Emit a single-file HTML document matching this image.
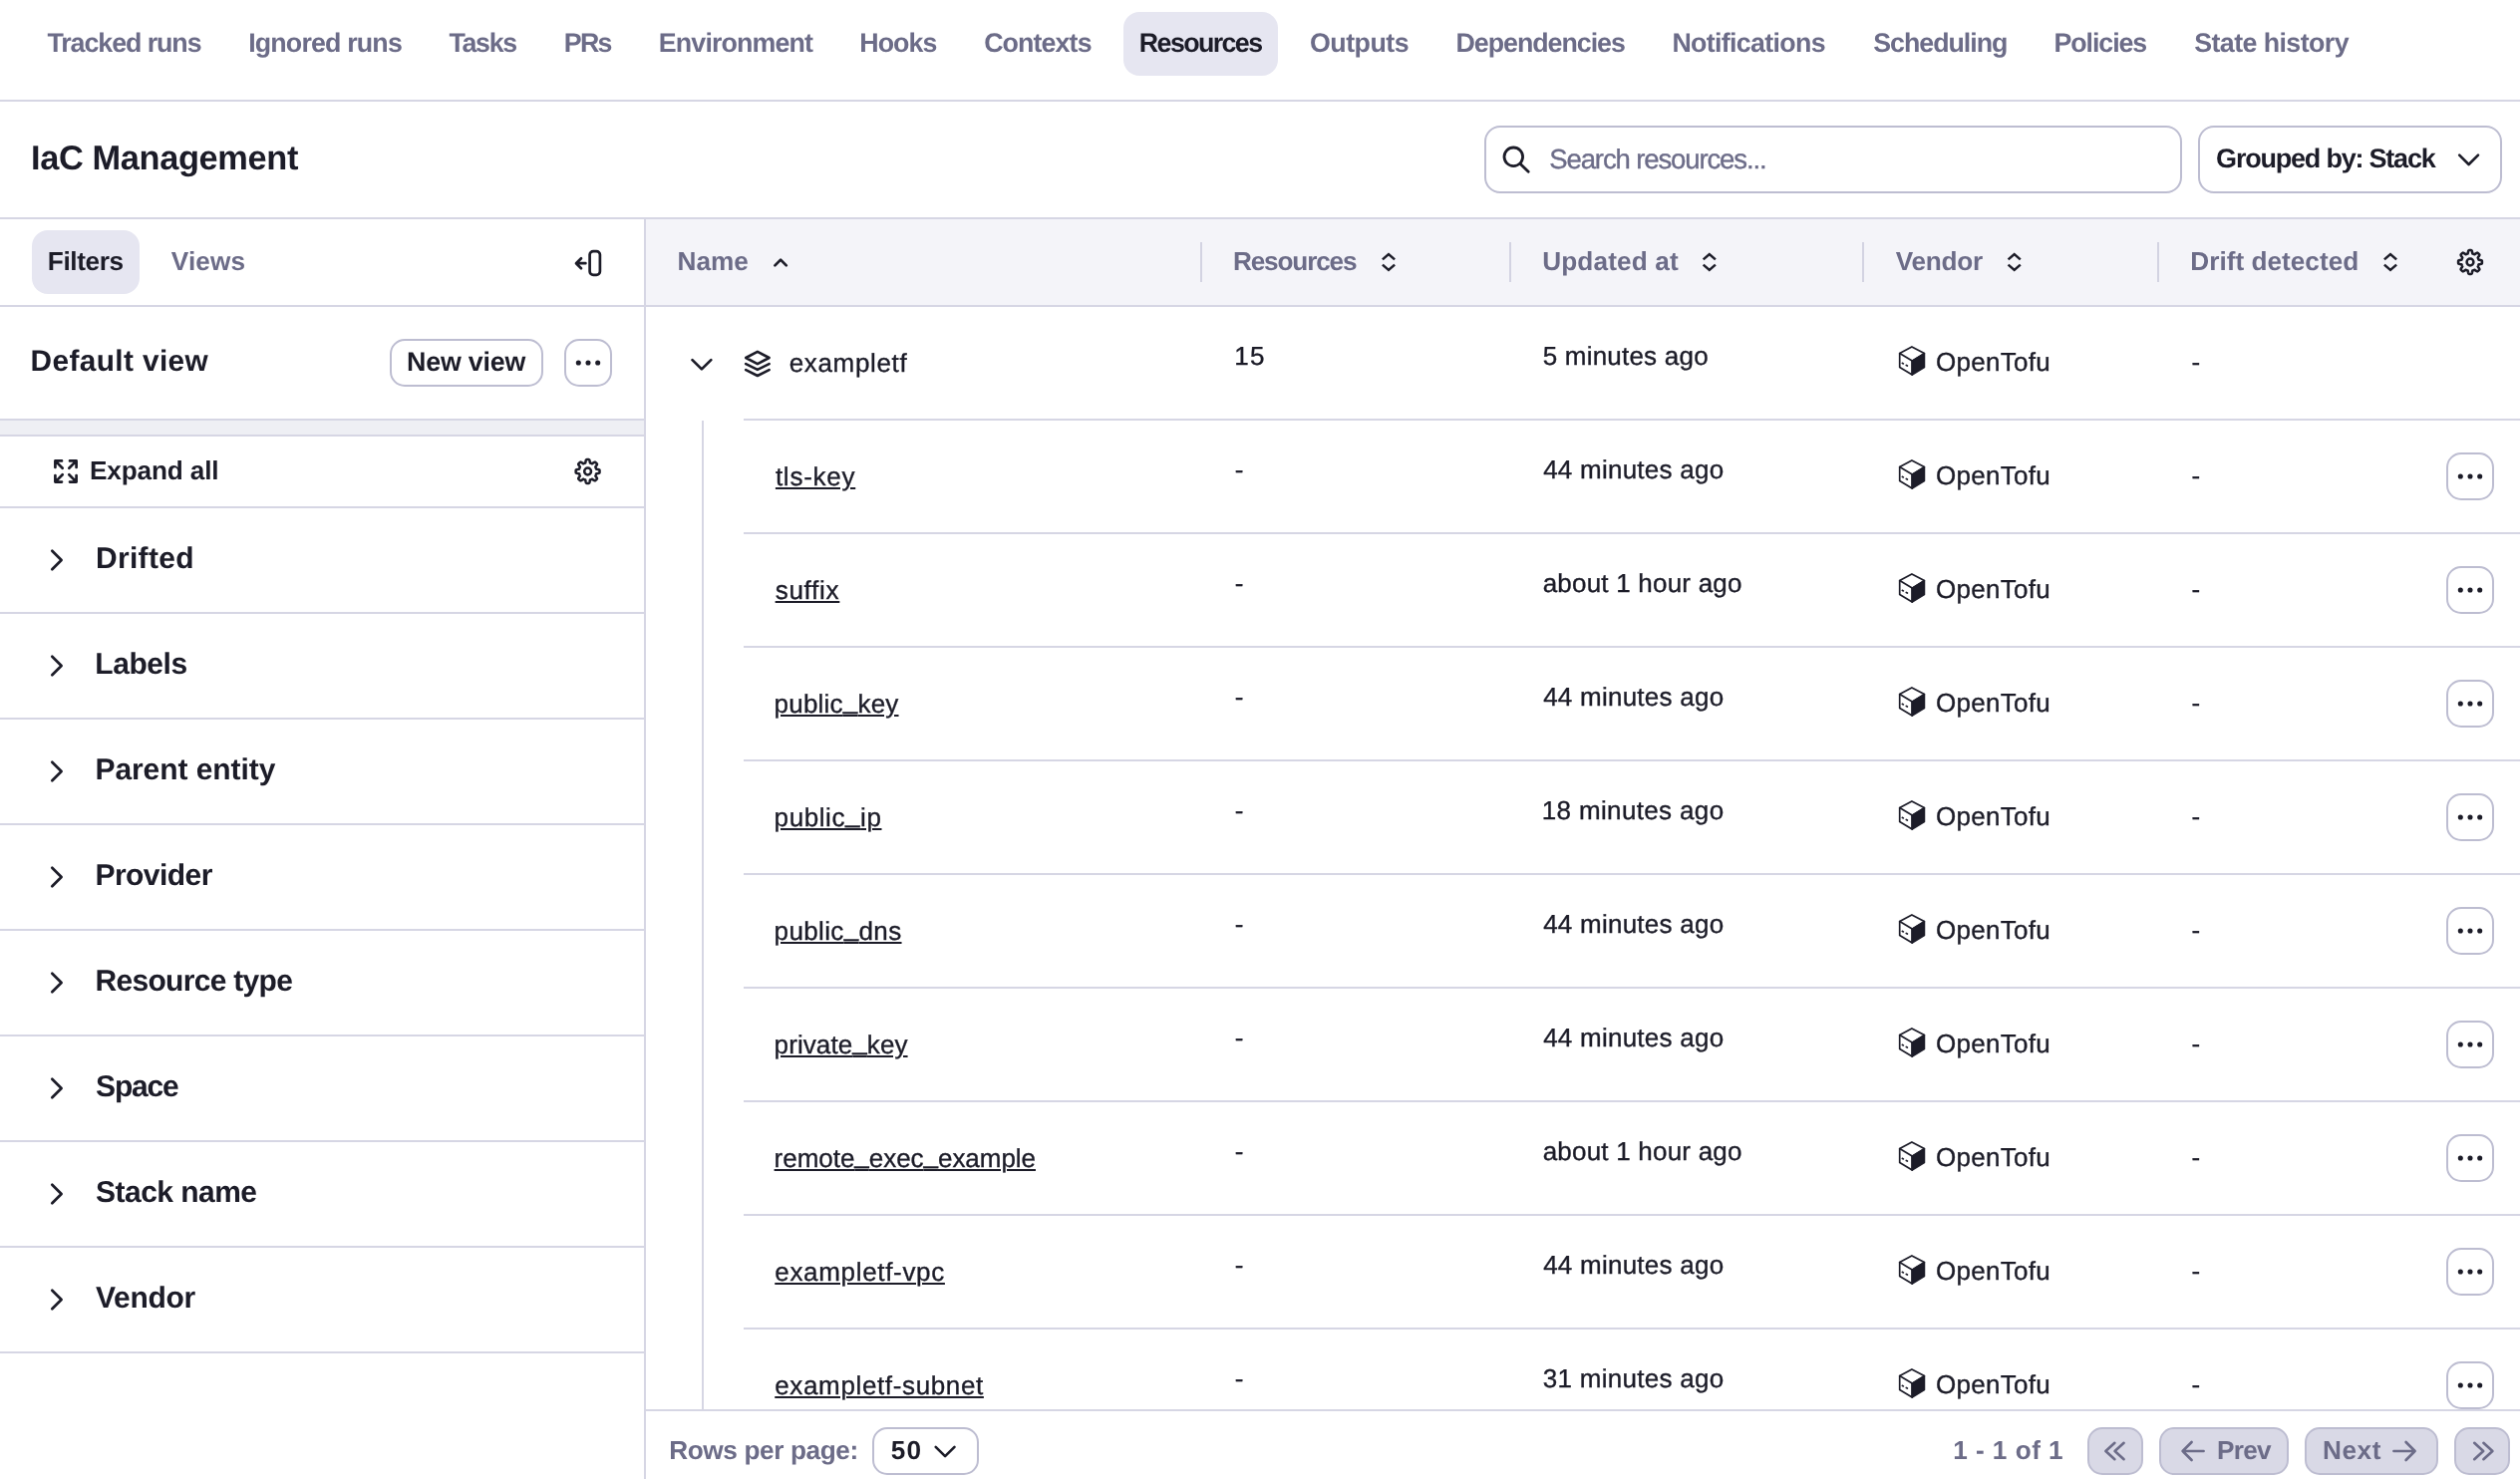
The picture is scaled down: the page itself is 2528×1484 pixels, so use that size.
<!DOCTYPE html>
<html lang="en"><head><meta charset="utf-8"><title>Resources</title>
<style>
html,body{margin:0;padding:0;background:#fff;}
body{text-rendering:geometricPrecision;width:2528px;height:1484px;position:relative;overflow:hidden;font-family:"Liberation Sans",sans-serif;color:#1c1c28;}
.t{position:absolute;white-space:nowrap;line-height:40px;height:40px;}
.us{vertical-align:3.8px;line-height:0;}
.u{text-decoration:underline;text-decoration-thickness:2px;text-underline-offset:1.5px;text-decoration-skip-ink:auto;}
</style></head><body><div id="app" style="position:absolute;left:0;top:0;width:2528px;height:1484px;will-change:transform;">
<div style="position:absolute;left:1127px;top:12px;width:155px;height:64px;background:#e6e6f1;border-radius:16px;"></div>
<div class="t " style="left:47.43px;top:23.01px;font-size:26.8px;letter-spacing:-1.063px;color:#6c6c88;font-weight:700;">Tracked runs</div>
<div class="t " style="left:249.16px;top:23.01px;font-size:26.8px;letter-spacing:-0.830px;color:#6c6c88;font-weight:700;">Ignored runs</div>
<div class="t " style="left:450.53px;top:23.01px;font-size:26.8px;letter-spacing:-1.357px;color:#6c6c88;font-weight:700;">Tasks</div>
<div class="t " style="left:565.76px;top:23.01px;font-size:26.8px;letter-spacing:-1.706px;color:#6c6c88;font-weight:700;">PRs</div>
<div class="t " style="left:660.86px;top:23.01px;font-size:26.8px;letter-spacing:-0.874px;color:#6c6c88;font-weight:700;">Environment</div>
<div class="t " style="left:862.26px;top:23.01px;font-size:26.8px;letter-spacing:-0.940px;color:#6c6c88;font-weight:700;">Hooks</div>
<div class="t " style="left:987.13px;top:23.01px;font-size:26.8px;letter-spacing:-0.889px;color:#6c6c88;font-weight:700;">Contexts</div>
<div class="t " style="left:1142.86px;top:23.01px;font-size:26.8px;letter-spacing:-1.608px;color:#1c1c28;font-weight:700;">Resources</div>
<div class="t " style="left:1313.93px;top:23.01px;font-size:26.8px;letter-spacing:-0.500px;color:#6c6c88;font-weight:700;">Outputs</div>
<div class="t " style="left:1460.46px;top:23.01px;font-size:26.8px;letter-spacing:-1.026px;color:#6c6c88;font-weight:700;">Dependencies</div>
<div class="t " style="left:1677.46px;top:23.01px;font-size:26.8px;letter-spacing:-0.680px;color:#6c6c88;font-weight:700;">Notifications</div>
<div class="t " style="left:1879.20px;top:23.01px;font-size:26.8px;letter-spacing:-1.023px;color:#6c6c88;font-weight:700;">Scheduling</div>
<div class="t " style="left:2060.56px;top:23.01px;font-size:26.8px;letter-spacing:-1.084px;color:#6c6c88;font-weight:700;">Policies</div>
<div class="t " style="left:2201.20px;top:23.01px;font-size:26.8px;letter-spacing:-0.578px;color:#6c6c88;font-weight:700;">State history</div>
<div style="position:absolute;left:0px;top:100px;width:2528px;height:2px;background:#d6d6e4;"></div>
<div class="t " style="left:31.06px;top:139.28px;font-size:34.4px;letter-spacing:-0.379px;color:#1c1c28;font-weight:700;">IaC Management</div>
<div style="position:absolute;left:1489px;top:126px;width:700px;height:68px;box-sizing:border-box;border:2px solid #bdbdd1;border-radius:16px;background:#fff;"></div>
<svg style="position:absolute;left:0;top:0;overflow:visible" width="1" height="1" fill="none" stroke="#1c1c28" stroke-width="2.8" stroke-linecap="round"><circle cx="1518.3" cy="157.3" r="9.3"/><path d="M1525.2 164.4L1533.2 172.2"/></svg>
<div class="t " style="left:1554.26px;top:140.07px;font-size:27.5px;letter-spacing:-1.114px;color:#6c6c88;-webkit-text-stroke:0.35px;">Search resources...</div>
<div style="position:absolute;left:2205px;top:126px;width:305px;height:68px;box-sizing:border-box;border:2px solid #bdbdd1;border-radius:16px;background:#fff;"></div>
<div class="t " style="left:2223.12px;top:139.24px;font-size:27px;letter-spacing:-1.216px;color:#1c1c28;font-weight:700;">Grouped by: Stack</div>
<svg style="position:absolute;left:0;top:0;overflow:visible" width="1" height="1" fill="none" stroke="#1c1c28" stroke-width="2.6" stroke-linecap="round" stroke-linejoin="round" ><path d="M2467.2 155.6L2476.6 165L2486 155.6"/></svg>
<div style="position:absolute;left:0px;top:218px;width:2528px;height:2px;background:#d6d6e4;"></div>
<div style="position:absolute;left:646px;top:220px;width:2px;height:1264px;background:#d6d6e4;"></div>
<div style="position:absolute;left:32px;top:231px;width:108px;height:64px;background:#e6e6f1;border-radius:16px;"></div>
<div class="t " style="left:47.80px;top:241.92px;font-size:26.2px;letter-spacing:-0.375px;color:#1c1c28;font-weight:700;">Filters</div>
<div class="t " style="left:171.87px;top:241.92px;font-size:26.2px;letter-spacing:0.107px;color:#6c6c88;font-weight:700;">Views</div>
<svg style="position:absolute;left:0;top:0;overflow:visible" width="1" height="1" fill="none" stroke="#1c1c28" stroke-width="2.7" stroke-linecap="round" stroke-linejoin="round" ><path d="M578.2 264.2H587.4M583 259.2L578 264.2L583 269.2"/></svg>
<svg style="position:absolute;left:0;top:0;overflow:visible" width="1" height="1" fill="none" stroke="#1c1c28" stroke-width="2.7"><rect x="591.6" y="252.2" width="10.3" height="23.6" rx="3.6"/></svg>
<div style="position:absolute;left:0px;top:306px;width:646px;height:2px;background:#d6d6e4;"></div>
<div class="t " style="left:30.56px;top:342.67px;font-size:29.8px;letter-spacing:0.396px;color:#1c1c28;font-weight:700;">Default view</div>
<div style="position:absolute;left:391px;top:340px;width:154px;height:48px;box-sizing:border-box;border:2px solid #bdbdd1;border-radius:15px;background:#fff;"></div>
<div class="t " style="left:408.06px;top:343.31px;font-size:26.8px;letter-spacing:-0.185px;color:#1c1c28;font-weight:700;">New view</div>
<div style="position:absolute;left:566px;top:340px;width:48px;height:48px;box-sizing:border-box;border:2px solid #bdbdd1;border-radius:15px;background:#fff;"></div>
<svg style="position:absolute;left:0;top:0;overflow:visible" width="1" height="1" fill="#1c1c28"><circle cx="580.3" cy="364" r="2.55"/><circle cx="590" cy="364" r="2.55"/><circle cx="599.7" cy="364" r="2.55"/></svg>
<div style="position:absolute;left:0px;top:420px;width:646px;height:2px;background:#d6d6e4;"></div>
<div style="position:absolute;left:0px;top:422px;width:646px;height:14px;background:#eeeff4;"></div>
<div style="position:absolute;left:0px;top:436px;width:646px;height:2px;background:#d6d6e4;"></div>
<svg style="position:absolute;left:0;top:0;overflow:visible" width="1" height="1" fill="none" stroke="#1c1c28" stroke-width="2.7" stroke-linecap="round" stroke-linejoin="round" ><path d="M62.0 462.4L55.4 462.4L55.4 469.0M55.4 462.4L62.7 469.7M70.0 462.4L76.6 462.4L76.6 469.0M76.6 462.4L69.3 469.7M62.0 483.6L55.4 483.6L55.4 477.0M55.4 483.6L62.7 476.3M70.0 483.6L76.6 483.6L76.6 477.0M76.6 483.6L69.3 476.3"/></svg>
<div class="t " style="left:89.90px;top:451.72px;font-size:26.2px;letter-spacing:-0.144px;color:#1c1c28;font-weight:700;">Expand all</div>
<svg style="position:absolute;left:0;top:0;overflow:visible" width="1" height="1" fill="none" stroke="#1c1c28" stroke-width="2.5" stroke-linejoin="round"><path d="M589.60 461.05L590.07 461.06L590.54 461.09L591.00 461.13L591.39 461.69L591.63 462.80L591.78 463.92L592.00 464.49L592.33 464.59L592.66 464.70L592.98 464.83L593.30 464.97L593.61 465.12L593.92 465.28L594.48 465.04L595.38 464.36L596.33 463.73L597.00 463.62L597.36 463.91L597.71 464.22L598.05 464.55L598.38 464.89L598.69 465.24L598.98 465.60L598.87 466.27L598.24 467.22L597.56 468.12L597.32 468.68L597.48 468.99L597.63 469.30L597.77 469.62L597.90 469.94L598.01 470.27L598.11 470.60L598.68 470.82L599.80 470.97L600.91 471.21L601.47 471.60L601.51 472.06L601.54 472.53L601.55 473.00L601.54 473.47L601.51 473.94L601.47 474.40L600.91 474.79L599.80 475.03L598.68 475.18L598.11 475.40L598.01 475.73L597.90 476.06L597.77 476.38L597.63 476.70L597.48 477.01L597.32 477.32L597.56 477.88L598.24 478.78L598.87 479.73L598.98 480.40L598.69 480.76L598.38 481.11L598.05 481.45L597.71 481.78L597.36 482.09L597.00 482.38L596.33 482.27L595.38 481.64L594.48 480.96L593.92 480.72L593.61 480.88L593.30 481.03L592.98 481.17L592.66 481.30L592.33 481.41L592.00 481.51L591.78 482.08L591.63 483.20L591.39 484.31L591.00 484.87L590.54 484.91L590.07 484.94L589.60 484.95L589.13 484.94L588.66 484.91L588.20 484.87L587.81 484.31L587.57 483.20L587.42 482.08L587.20 481.51L586.87 481.41L586.54 481.30L586.22 481.17L585.90 481.03L585.59 480.88L585.28 480.72L584.72 480.96L583.82 481.64L582.87 482.27L582.20 482.38L581.84 482.09L581.49 481.78L581.15 481.45L580.82 481.11L580.51 480.76L580.22 480.40L580.33 479.73L580.96 478.78L581.64 477.88L581.88 477.32L581.72 477.01L581.57 476.70L581.43 476.38L581.30 476.06L581.19 475.73L581.09 475.40L580.52 475.18L579.40 475.03L578.29 474.79L577.73 474.40L577.69 473.94L577.66 473.47L577.65 473.00L577.66 472.53L577.69 472.06L577.73 471.60L578.29 471.21L579.40 470.97L580.52 470.82L581.09 470.60L581.19 470.27L581.30 469.94L581.43 469.62L581.57 469.30L581.72 468.99L581.88 468.68L581.64 468.12L580.96 467.22L580.33 466.27L580.22 465.60L580.51 465.24L580.82 464.89L581.15 464.55L581.49 464.22L581.84 463.91L582.20 463.62L582.87 463.73L583.82 464.36L584.72 465.04L585.28 465.28L585.59 465.12L585.90 464.97L586.22 464.83L586.54 464.70L586.87 464.59L587.20 464.49L587.42 463.92L587.57 462.80L587.81 461.69L588.20 461.13L588.66 461.09L589.13 461.06L589.60 461.05Z"/><circle cx="589.6" cy="473" r="3.4"/></svg>
<div style="position:absolute;left:0px;top:508px;width:646px;height:2px;background:#d6d6e4;"></div>
<svg style="position:absolute;left:0;top:0;overflow:visible" width="1" height="1" fill="none" stroke="#1c1c28" stroke-width="2.7" stroke-linecap="round" stroke-linejoin="round" ><path d="M52.3 552.7L61.6 562L52.3 571.3"/></svg>
<div class="t " style="left:96.05px;top:540.61px;font-size:30.0px;letter-spacing:0.300px;color:#1c1c28;font-weight:700;">Drifted</div>
<div style="position:absolute;left:0px;top:614px;width:646px;height:2px;background:#d6d6e4;"></div>
<svg style="position:absolute;left:0;top:0;overflow:visible" width="1" height="1" fill="none" stroke="#1c1c28" stroke-width="2.7" stroke-linecap="round" stroke-linejoin="round" ><path d="M52.3 658.7L61.6 668L52.3 677.3"/></svg>
<div class="t " style="left:95.35px;top:646.61px;font-size:30.0px;letter-spacing:-0.440px;color:#1c1c28;font-weight:700;">Labels</div>
<div style="position:absolute;left:0px;top:720px;width:646px;height:2px;background:#d6d6e4;"></div>
<svg style="position:absolute;left:0;top:0;overflow:visible" width="1" height="1" fill="none" stroke="#1c1c28" stroke-width="2.7" stroke-linecap="round" stroke-linejoin="round" ><path d="M52.3 764.7L61.6 774L52.3 783.3"/></svg>
<div class="t " style="left:95.45px;top:752.61px;font-size:30.0px;letter-spacing:-0.063px;color:#1c1c28;font-weight:700;">Parent entity</div>
<div style="position:absolute;left:0px;top:826px;width:646px;height:2px;background:#d6d6e4;"></div>
<svg style="position:absolute;left:0;top:0;overflow:visible" width="1" height="1" fill="none" stroke="#1c1c28" stroke-width="2.7" stroke-linecap="round" stroke-linejoin="round" ><path d="M52.3 870.7L61.6 880L52.3 889.3"/></svg>
<div class="t " style="left:95.45px;top:858.61px;font-size:30.0px;letter-spacing:-0.543px;color:#1c1c28;font-weight:700;">Provider</div>
<div style="position:absolute;left:0px;top:932px;width:646px;height:2px;background:#d6d6e4;"></div>
<svg style="position:absolute;left:0;top:0;overflow:visible" width="1" height="1" fill="none" stroke="#1c1c28" stroke-width="2.7" stroke-linecap="round" stroke-linejoin="round" ><path d="M52.3 976.7L61.6 986L52.3 995.3"/></svg>
<div class="t " style="left:95.45px;top:964.61px;font-size:30.0px;letter-spacing:-0.688px;color:#1c1c28;font-weight:700;">Resource type</div>
<div style="position:absolute;left:0px;top:1038px;width:646px;height:2px;background:#d6d6e4;"></div>
<svg style="position:absolute;left:0;top:0;overflow:visible" width="1" height="1" fill="none" stroke="#1c1c28" stroke-width="2.7" stroke-linecap="round" stroke-linejoin="round" ><path d="M52.3 1082.7L61.6 1092L52.3 1101.3"/></svg>
<div class="t " style="left:96.10px;top:1070.61px;font-size:30.0px;letter-spacing:-1.187px;color:#1c1c28;font-weight:700;">Space</div>
<div style="position:absolute;left:0px;top:1144px;width:646px;height:2px;background:#d6d6e4;"></div>
<svg style="position:absolute;left:0;top:0;overflow:visible" width="1" height="1" fill="none" stroke="#1c1c28" stroke-width="2.7" stroke-linecap="round" stroke-linejoin="round" ><path d="M52.3 1188.7L61.6 1198L52.3 1207.3"/></svg>
<div class="t " style="left:96.10px;top:1176.61px;font-size:30.0px;letter-spacing:-0.544px;color:#1c1c28;font-weight:700;">Stack name</div>
<div style="position:absolute;left:0px;top:1250px;width:646px;height:2px;background:#d6d6e4;"></div>
<svg style="position:absolute;left:0;top:0;overflow:visible" width="1" height="1" fill="none" stroke="#1c1c28" stroke-width="2.7" stroke-linecap="round" stroke-linejoin="round" ><path d="M52.3 1294.7L61.6 1304L52.3 1313.3"/></svg>
<div class="t " style="left:95.95px;top:1282.61px;font-size:30.0px;letter-spacing:-0.300px;color:#1c1c28;font-weight:700;">Vendor</div>
<div style="position:absolute;left:0px;top:1356px;width:646px;height:2px;background:#d6d6e4;"></div>
<div style="position:absolute;left:648px;top:220px;width:1880px;height:86px;background:#f4f4f9;"></div>
<div style="position:absolute;left:648px;top:306px;width:1880px;height:2px;background:#d6d6e4;"></div>
<div class="t " style="left:679.60px;top:241.72px;font-size:26.2px;letter-spacing:-0.002px;color:#6c6c88;font-weight:700;">Name</div>
<svg style="position:absolute;left:0;top:0;overflow:visible" width="1" height="1" fill="none" stroke="#1c1c28" stroke-width="2.7" stroke-linecap="round" stroke-linejoin="round" ><path d="M777.4 266.4L783.1 260.6L788.8 266.4"/></svg>
<div style="position:absolute;left:1204px;top:243px;width:2px;height:40px;background:#d3d3e2;"></div>
<div style="position:absolute;left:1514px;top:243px;width:2px;height:40px;background:#d3d3e2;"></div>
<div style="position:absolute;left:1868px;top:243px;width:2px;height:40px;background:#d3d3e2;"></div>
<div style="position:absolute;left:2164px;top:243px;width:2px;height:40px;background:#d3d3e2;"></div>
<div class="t " style="left:1236.90px;top:241.72px;font-size:26.2px;letter-spacing:-1.158px;color:#6c6c88;font-weight:700;">Resources</div>
<svg style="position:absolute;left:0;top:0;overflow:visible" width="1" height="1" fill="none" stroke="#1c1c28" stroke-width="2.5" stroke-linecap="butt" stroke-linejoin="miter"><path d="M1386.9 260.4L1393 255.1L1399.1 260.4M1386.9 265.6L1393 270.9L1399.1 265.6"/></svg>
<div class="t " style="left:1547.13px;top:241.72px;font-size:26.2px;letter-spacing:0.146px;color:#6c6c88;font-weight:700;">Updated at</div>
<svg style="position:absolute;left:0;top:0;overflow:visible" width="1" height="1" fill="none" stroke="#1c1c28" stroke-width="2.5" stroke-linecap="butt" stroke-linejoin="miter"><path d="M1708.7 260.4L1714.8 255.1L1720.8999999999999 260.4M1708.7 265.6L1714.8 270.9L1720.8999999999999 265.6"/></svg>
<div class="t " style="left:1901.87px;top:241.72px;font-size:26.2px;letter-spacing:-0.299px;color:#6c6c88;font-weight:700;">Vendor</div>
<svg style="position:absolute;left:0;top:0;overflow:visible" width="1" height="1" fill="none" stroke="#1c1c28" stroke-width="2.5" stroke-linecap="butt" stroke-linejoin="miter"><path d="M2014.6000000000001 260.4L2020.7 255.1L2026.8 260.4M2014.6000000000001 265.6L2020.7 270.9L2026.8 265.6"/></svg>
<div class="t " style="left:2197.30px;top:241.72px;font-size:26.2px;letter-spacing:0.011px;color:#6c6c88;font-weight:700;">Drift detected</div>
<svg style="position:absolute;left:0;top:0;overflow:visible" width="1" height="1" fill="none" stroke="#1c1c28" stroke-width="2.5" stroke-linecap="butt" stroke-linejoin="miter"><path d="M2391.9 260.4L2398 255.1L2404.1 260.4M2391.9 265.6L2398 270.9L2404.1 265.6"/></svg>
<svg style="position:absolute;left:0;top:0;overflow:visible" width="1" height="1" fill="none" stroke="#1c1c28" stroke-width="2.5" stroke-linejoin="round"><path d="M2478.00 251.05L2478.47 251.06L2478.94 251.09L2479.40 251.13L2479.79 251.69L2480.03 252.80L2480.18 253.92L2480.40 254.49L2480.73 254.59L2481.06 254.70L2481.38 254.83L2481.70 254.97L2482.01 255.12L2482.32 255.28L2482.88 255.04L2483.78 254.36L2484.73 253.73L2485.40 253.62L2485.76 253.91L2486.11 254.22L2486.45 254.55L2486.78 254.89L2487.09 255.24L2487.38 255.60L2487.27 256.27L2486.64 257.22L2485.96 258.12L2485.72 258.68L2485.88 258.99L2486.03 259.30L2486.17 259.62L2486.30 259.94L2486.41 260.27L2486.51 260.60L2487.08 260.82L2488.20 260.97L2489.31 261.21L2489.87 261.60L2489.91 262.06L2489.94 262.53L2489.95 263.00L2489.94 263.47L2489.91 263.94L2489.87 264.40L2489.31 264.79L2488.20 265.03L2487.08 265.18L2486.51 265.40L2486.41 265.73L2486.30 266.06L2486.17 266.38L2486.03 266.70L2485.88 267.01L2485.72 267.32L2485.96 267.88L2486.64 268.78L2487.27 269.73L2487.38 270.40L2487.09 270.76L2486.78 271.11L2486.45 271.45L2486.11 271.78L2485.76 272.09L2485.40 272.38L2484.73 272.27L2483.78 271.64L2482.88 270.96L2482.32 270.72L2482.01 270.88L2481.70 271.03L2481.38 271.17L2481.06 271.30L2480.73 271.41L2480.40 271.51L2480.18 272.08L2480.03 273.20L2479.79 274.31L2479.40 274.87L2478.94 274.91L2478.47 274.94L2478.00 274.95L2477.53 274.94L2477.06 274.91L2476.60 274.87L2476.21 274.31L2475.97 273.20L2475.82 272.08L2475.60 271.51L2475.27 271.41L2474.94 271.30L2474.62 271.17L2474.30 271.03L2473.99 270.88L2473.68 270.72L2473.12 270.96L2472.22 271.64L2471.27 272.27L2470.60 272.38L2470.24 272.09L2469.89 271.78L2469.55 271.45L2469.22 271.11L2468.91 270.76L2468.62 270.40L2468.73 269.73L2469.36 268.78L2470.04 267.88L2470.28 267.32L2470.12 267.01L2469.97 266.70L2469.83 266.38L2469.70 266.06L2469.59 265.73L2469.49 265.40L2468.92 265.18L2467.80 265.03L2466.69 264.79L2466.13 264.40L2466.09 263.94L2466.06 263.47L2466.05 263.00L2466.06 262.53L2466.09 262.06L2466.13 261.60L2466.69 261.21L2467.80 260.97L2468.92 260.82L2469.49 260.60L2469.59 260.27L2469.70 259.94L2469.83 259.62L2469.97 259.30L2470.12 258.99L2470.28 258.68L2470.04 258.12L2469.36 257.22L2468.73 256.27L2468.62 255.60L2468.91 255.24L2469.22 254.89L2469.55 254.55L2469.89 254.22L2470.24 253.91L2470.60 253.62L2471.27 253.73L2472.22 254.36L2473.12 255.04L2473.68 255.28L2473.99 255.12L2474.30 254.97L2474.62 254.83L2474.94 254.70L2475.27 254.59L2475.60 254.49L2475.82 253.92L2475.97 252.80L2476.21 251.69L2476.60 251.13L2477.06 251.09L2477.53 251.06L2478.00 251.05Z"/><circle cx="2478" cy="263" r="3.4"/></svg>
<svg style="position:absolute;left:0;top:0;overflow:visible" width="1" height="1" fill="none" stroke="#1c1c28" stroke-width="2.7" stroke-linecap="round" stroke-linejoin="round" ><path d="M694.5 361.1L703.9 370.4L713.3 361.1"/></svg>
<svg style="position:absolute;left:0;top:0;overflow:visible" width="1" height="1" fill="none" stroke="#1c1c28" stroke-width="2.6" stroke-linecap="round" stroke-linejoin="round" ><path d="M759.9 352.9L771.6 359L759.9 365.1L748.1999999999999 359Z M748.1999999999999 365.1L759.9 370.9L771.6 365.1 M748.1999999999999 371.1L759.9 377L771.6 371.1"/></svg>
<div class="t " style="left:791.66px;top:344.29px;font-size:26px;letter-spacing:0.662px;color:#1c1c28;-webkit-text-stroke:0.35px;">exampletf</div>
<div class="t " style="left:1238.27px;top:336.69px;font-size:26px;letter-spacing:1.300px;color:#1c1c28;-webkit-text-stroke:0.35px;">15</div>
<div class="t " style="left:1547.66px;top:336.69px;font-size:26px;letter-spacing:0.217px;color:#1c1c28;-webkit-text-stroke:0.35px;">5 minutes ago</div>
<svg style="position:absolute;left:0;top:0;overflow:visible" width="1" height="1" stroke="#1c1c28" stroke-width="1.7" stroke-linejoin="round" stroke-linecap="round"><path fill="#1c1c28" d="M1918.2 362.1L1930.4 354.6L1930.4 368.6L1918.2 376.1Z"/><path fill="none" d="M1917.9 347.9L1930.4 354.6L1918.2 362.1L1905.7 354.6Z"/><path fill="none" d="M1905.7 354.6L1905.7 368.6L1918.2 376.1L1918.2 362.1"/><path fill="none" stroke-width="1.7" d="M1908.3 364.3l1.1 0.6M1912.3 366.5l1.1 0.6"/></svg>
<div class="t " style="left:1942.03px;top:342.79px;font-size:26px;letter-spacing:0.293px;color:#1c1c28;-webkit-text-stroke:0.35px;">OpenTofu</div>
<div class="t " style="left:2198.43px;top:342.99px;font-size:26px;letter-spacing:0.000px;color:#1c1c28;-webkit-text-stroke:0.35px;">-</div>
<div style="position:absolute;left:746px;top:420px;width:1782px;height:2px;background:#d6d6e4;"></div>
<div style="position:absolute;left:704px;top:422px;width:2px;height:994px;background:#d6d6e4;"></div>
<div class="t u" style="left:777.91px;top:458.19px;font-size:26px;letter-spacing:0.742px;color:#1c1c28;-webkit-text-stroke:0.35px;">tls-key</div>
<div class="t " style="left:1238.63px;top:450.99px;font-size:26px;letter-spacing:0.000px;color:#1c1c28;-webkit-text-stroke:0.35px;">-</div>
<div class="t " style="left:1548.18px;top:450.99px;font-size:26px;letter-spacing:0.242px;color:#1c1c28;-webkit-text-stroke:0.35px;">44 minutes ago</div>
<svg style="position:absolute;left:0;top:0;overflow:visible" width="1" height="1" stroke="#1c1c28" stroke-width="1.7" stroke-linejoin="round" stroke-linecap="round"><path fill="#1c1c28" d="M1918.2 476.1L1930.4 468.6L1930.4 482.6L1918.2 490.1Z"/><path fill="none" d="M1917.9 461.9L1930.4 468.6L1918.2 476.1L1905.7 468.6Z"/><path fill="none" d="M1905.7 468.6L1905.7 482.6L1918.2 490.1L1918.2 476.1"/><path fill="none" stroke-width="1.7" d="M1908.3 478.3l1.1 0.6M1912.3 480.5l1.1 0.6"/></svg>
<div class="t " style="left:1942.03px;top:456.79px;font-size:26px;letter-spacing:0.293px;color:#1c1c28;-webkit-text-stroke:0.35px;">OpenTofu</div>
<div class="t " style="left:2198.43px;top:456.99px;font-size:26px;letter-spacing:0.000px;color:#1c1c28;-webkit-text-stroke:0.35px;">-</div>
<div style="position:absolute;left:2454px;top:454px;width:48px;height:48px;box-sizing:border-box;border:2px solid #bdbdd1;border-radius:15px;background:#fff;"></div>
<svg style="position:absolute;left:0;top:0;overflow:visible" width="1" height="1" fill="#1c1c28"><circle cx="2468.3" cy="478" r="2.55"/><circle cx="2478" cy="478" r="2.55"/><circle cx="2487.7" cy="478" r="2.55"/></svg>
<div style="position:absolute;left:746px;top:534px;width:1782px;height:2px;background:#d6d6e4;"></div>
<div class="t u" style="left:777.65px;top:572.19px;font-size:26px;letter-spacing:0.744px;color:#1c1c28;-webkit-text-stroke:0.35px;">suffix</div>
<div class="t " style="left:1238.63px;top:564.99px;font-size:26px;letter-spacing:0.000px;color:#1c1c28;-webkit-text-stroke:0.35px;">-</div>
<div class="t " style="left:1547.66px;top:564.99px;font-size:26px;letter-spacing:0.215px;color:#1c1c28;-webkit-text-stroke:0.35px;">about 1 hour ago</div>
<svg style="position:absolute;left:0;top:0;overflow:visible" width="1" height="1" stroke="#1c1c28" stroke-width="1.7" stroke-linejoin="round" stroke-linecap="round"><path fill="#1c1c28" d="M1918.2 590.1L1930.4 582.6L1930.4 596.6L1918.2 604.1Z"/><path fill="none" d="M1917.9 575.9L1930.4 582.6L1918.2 590.1L1905.7 582.6Z"/><path fill="none" d="M1905.7 582.6L1905.7 596.6L1918.2 604.1L1918.2 590.1"/><path fill="none" stroke-width="1.7" d="M1908.3 592.3l1.1 0.6M1912.3 594.5l1.1 0.6"/></svg>
<div class="t " style="left:1942.03px;top:570.79px;font-size:26px;letter-spacing:0.293px;color:#1c1c28;-webkit-text-stroke:0.35px;">OpenTofu</div>
<div class="t " style="left:2198.43px;top:570.99px;font-size:26px;letter-spacing:0.000px;color:#1c1c28;-webkit-text-stroke:0.35px;">-</div>
<div style="position:absolute;left:2454px;top:568px;width:48px;height:48px;box-sizing:border-box;border:2px solid #bdbdd1;border-radius:15px;background:#fff;"></div>
<svg style="position:absolute;left:0;top:0;overflow:visible" width="1" height="1" fill="#1c1c28"><circle cx="2468.3" cy="592" r="2.55"/><circle cx="2478" cy="592" r="2.55"/><circle cx="2487.7" cy="592" r="2.55"/></svg>
<div style="position:absolute;left:746px;top:648px;width:1782px;height:2px;background:#d6d6e4;"></div>
<div class="t u" style="left:776.61px;top:686.19px;font-size:26px;letter-spacing:0.204px;color:#1c1c28;-webkit-text-stroke:0.35px;">public<span class="us">_</span>key</div>
<div class="t " style="left:1238.63px;top:678.99px;font-size:26px;letter-spacing:0.000px;color:#1c1c28;-webkit-text-stroke:0.35px;">-</div>
<div class="t " style="left:1548.18px;top:678.99px;font-size:26px;letter-spacing:0.242px;color:#1c1c28;-webkit-text-stroke:0.35px;">44 minutes ago</div>
<svg style="position:absolute;left:0;top:0;overflow:visible" width="1" height="1" stroke="#1c1c28" stroke-width="1.7" stroke-linejoin="round" stroke-linecap="round"><path fill="#1c1c28" d="M1918.2 704.1L1930.4 696.6L1930.4 710.6L1918.2 718.1Z"/><path fill="none" d="M1917.9 689.9L1930.4 696.6L1918.2 704.1L1905.7 696.6Z"/><path fill="none" d="M1905.7 696.6L1905.7 710.6L1918.2 718.1L1918.2 704.1"/><path fill="none" stroke-width="1.7" d="M1908.3 706.3l1.1 0.6M1912.3 708.5l1.1 0.6"/></svg>
<div class="t " style="left:1942.03px;top:684.79px;font-size:26px;letter-spacing:0.293px;color:#1c1c28;-webkit-text-stroke:0.35px;">OpenTofu</div>
<div class="t " style="left:2198.43px;top:684.99px;font-size:26px;letter-spacing:0.000px;color:#1c1c28;-webkit-text-stroke:0.35px;">-</div>
<div style="position:absolute;left:2454px;top:682px;width:48px;height:48px;box-sizing:border-box;border:2px solid #bdbdd1;border-radius:15px;background:#fff;"></div>
<svg style="position:absolute;left:0;top:0;overflow:visible" width="1" height="1" fill="#1c1c28"><circle cx="2468.3" cy="706" r="2.55"/><circle cx="2478" cy="706" r="2.55"/><circle cx="2487.7" cy="706" r="2.55"/></svg>
<div style="position:absolute;left:746px;top:762px;width:1782px;height:2px;background:#d6d6e4;"></div>
<div class="t u" style="left:776.61px;top:800.19px;font-size:26px;letter-spacing:0.582px;color:#1c1c28;-webkit-text-stroke:0.35px;">public<span class="us">_</span>ip</div>
<div class="t " style="left:1238.63px;top:792.99px;font-size:26px;letter-spacing:0.000px;color:#1c1c28;-webkit-text-stroke:0.35px;">-</div>
<div class="t " style="left:1546.75px;top:792.99px;font-size:26px;letter-spacing:0.352px;color:#1c1c28;-webkit-text-stroke:0.35px;">18 minutes ago</div>
<svg style="position:absolute;left:0;top:0;overflow:visible" width="1" height="1" stroke="#1c1c28" stroke-width="1.7" stroke-linejoin="round" stroke-linecap="round"><path fill="#1c1c28" d="M1918.2 818.1L1930.4 810.6L1930.4 824.6L1918.2 832.1Z"/><path fill="none" d="M1917.9 803.9L1930.4 810.6L1918.2 818.1L1905.7 810.6Z"/><path fill="none" d="M1905.7 810.6L1905.7 824.6L1918.2 832.1L1918.2 818.1"/><path fill="none" stroke-width="1.7" d="M1908.3 820.3l1.1 0.6M1912.3 822.5l1.1 0.6"/></svg>
<div class="t " style="left:1942.03px;top:798.79px;font-size:26px;letter-spacing:0.293px;color:#1c1c28;-webkit-text-stroke:0.35px;">OpenTofu</div>
<div class="t " style="left:2198.43px;top:798.99px;font-size:26px;letter-spacing:0.000px;color:#1c1c28;-webkit-text-stroke:0.35px;">-</div>
<div style="position:absolute;left:2454px;top:796px;width:48px;height:48px;box-sizing:border-box;border:2px solid #bdbdd1;border-radius:15px;background:#fff;"></div>
<svg style="position:absolute;left:0;top:0;overflow:visible" width="1" height="1" fill="#1c1c28"><circle cx="2468.3" cy="820" r="2.55"/><circle cx="2478" cy="820" r="2.55"/><circle cx="2487.7" cy="820" r="2.55"/></svg>
<div style="position:absolute;left:746px;top:876px;width:1782px;height:2px;background:#d6d6e4;"></div>
<div class="t u" style="left:776.61px;top:914.19px;font-size:26px;letter-spacing:0.358px;color:#1c1c28;-webkit-text-stroke:0.35px;">public<span class="us">_</span>dns</div>
<div class="t " style="left:1238.63px;top:906.99px;font-size:26px;letter-spacing:0.000px;color:#1c1c28;-webkit-text-stroke:0.35px;">-</div>
<div class="t " style="left:1548.18px;top:906.99px;font-size:26px;letter-spacing:0.242px;color:#1c1c28;-webkit-text-stroke:0.35px;">44 minutes ago</div>
<svg style="position:absolute;left:0;top:0;overflow:visible" width="1" height="1" stroke="#1c1c28" stroke-width="1.7" stroke-linejoin="round" stroke-linecap="round"><path fill="#1c1c28" d="M1918.2 932.1L1930.4 924.6L1930.4 938.6L1918.2 946.1Z"/><path fill="none" d="M1917.9 917.9L1930.4 924.6L1918.2 932.1L1905.7 924.6Z"/><path fill="none" d="M1905.7 924.6L1905.7 938.6L1918.2 946.1L1918.2 932.1"/><path fill="none" stroke-width="1.7" d="M1908.3 934.3l1.1 0.6M1912.3 936.5l1.1 0.6"/></svg>
<div class="t " style="left:1942.03px;top:912.79px;font-size:26px;letter-spacing:0.293px;color:#1c1c28;-webkit-text-stroke:0.35px;">OpenTofu</div>
<div class="t " style="left:2198.43px;top:912.99px;font-size:26px;letter-spacing:0.000px;color:#1c1c28;-webkit-text-stroke:0.35px;">-</div>
<div style="position:absolute;left:2454px;top:910px;width:48px;height:48px;box-sizing:border-box;border:2px solid #bdbdd1;border-radius:15px;background:#fff;"></div>
<svg style="position:absolute;left:0;top:0;overflow:visible" width="1" height="1" fill="#1c1c28"><circle cx="2468.3" cy="934" r="2.55"/><circle cx="2478" cy="934" r="2.55"/><circle cx="2487.7" cy="934" r="2.55"/></svg>
<div style="position:absolute;left:746px;top:990px;width:1782px;height:2px;background:#d6d6e4;"></div>
<div class="t u" style="left:776.61px;top:1028.19px;font-size:26px;letter-spacing:0.090px;color:#1c1c28;-webkit-text-stroke:0.35px;">private<span class="us">_</span>key</div>
<div class="t " style="left:1238.63px;top:1020.99px;font-size:26px;letter-spacing:0.000px;color:#1c1c28;-webkit-text-stroke:0.35px;">-</div>
<div class="t " style="left:1548.18px;top:1020.99px;font-size:26px;letter-spacing:0.242px;color:#1c1c28;-webkit-text-stroke:0.35px;">44 minutes ago</div>
<svg style="position:absolute;left:0;top:0;overflow:visible" width="1" height="1" stroke="#1c1c28" stroke-width="1.7" stroke-linejoin="round" stroke-linecap="round"><path fill="#1c1c28" d="M1918.2 1046.1L1930.4 1038.6L1930.4 1052.6L1918.2 1060.1Z"/><path fill="none" d="M1917.9 1031.9L1930.4 1038.6L1918.2 1046.1L1905.7 1038.6Z"/><path fill="none" d="M1905.7 1038.6L1905.7 1052.6L1918.2 1060.1L1918.2 1046.1"/><path fill="none" stroke-width="1.7" d="M1908.3 1048.3l1.1 0.6M1912.3 1050.5l1.1 0.6"/></svg>
<div class="t " style="left:1942.03px;top:1026.79px;font-size:26px;letter-spacing:0.293px;color:#1c1c28;-webkit-text-stroke:0.35px;">OpenTofu</div>
<div class="t " style="left:2198.43px;top:1026.99px;font-size:26px;letter-spacing:0.000px;color:#1c1c28;-webkit-text-stroke:0.35px;">-</div>
<div style="position:absolute;left:2454px;top:1024px;width:48px;height:48px;box-sizing:border-box;border:2px solid #bdbdd1;border-radius:15px;background:#fff;"></div>
<svg style="position:absolute;left:0;top:0;overflow:visible" width="1" height="1" fill="#1c1c28"><circle cx="2468.3" cy="1048" r="2.55"/><circle cx="2478" cy="1048" r="2.55"/><circle cx="2487.7" cy="1048" r="2.55"/></svg>
<div style="position:absolute;left:746px;top:1104px;width:1782px;height:2px;background:#d6d6e4;"></div>
<div class="t u" style="left:776.61px;top:1142.19px;font-size:26px;letter-spacing:-0.037px;color:#1c1c28;-webkit-text-stroke:0.35px;">remote<span class="us">_</span>exec<span class="us">_</span>example</div>
<div class="t " style="left:1238.63px;top:1134.99px;font-size:26px;letter-spacing:0.000px;color:#1c1c28;-webkit-text-stroke:0.35px;">-</div>
<div class="t " style="left:1547.66px;top:1134.99px;font-size:26px;letter-spacing:0.215px;color:#1c1c28;-webkit-text-stroke:0.35px;">about 1 hour ago</div>
<svg style="position:absolute;left:0;top:0;overflow:visible" width="1" height="1" stroke="#1c1c28" stroke-width="1.7" stroke-linejoin="round" stroke-linecap="round"><path fill="#1c1c28" d="M1918.2 1160.1L1930.4 1152.6L1930.4 1166.6L1918.2 1174.1Z"/><path fill="none" d="M1917.9 1145.9L1930.4 1152.6L1918.2 1160.1L1905.7 1152.6Z"/><path fill="none" d="M1905.7 1152.6L1905.7 1166.6L1918.2 1174.1L1918.2 1160.1"/><path fill="none" stroke-width="1.7" d="M1908.3 1162.3l1.1 0.6M1912.3 1164.5l1.1 0.6"/></svg>
<div class="t " style="left:1942.03px;top:1140.79px;font-size:26px;letter-spacing:0.293px;color:#1c1c28;-webkit-text-stroke:0.35px;">OpenTofu</div>
<div class="t " style="left:2198.43px;top:1140.99px;font-size:26px;letter-spacing:0.000px;color:#1c1c28;-webkit-text-stroke:0.35px;">-</div>
<div style="position:absolute;left:2454px;top:1138px;width:48px;height:48px;box-sizing:border-box;border:2px solid #bdbdd1;border-radius:15px;background:#fff;"></div>
<svg style="position:absolute;left:0;top:0;overflow:visible" width="1" height="1" fill="#1c1c28"><circle cx="2468.3" cy="1162" r="2.55"/><circle cx="2478" cy="1162" r="2.55"/><circle cx="2487.7" cy="1162" r="2.55"/></svg>
<div style="position:absolute;left:746px;top:1218px;width:1782px;height:2px;background:#d6d6e4;"></div>
<div class="t u" style="left:777.26px;top:1256.19px;font-size:26px;letter-spacing:0.678px;color:#1c1c28;-webkit-text-stroke:0.35px;">exampletf-vpc</div>
<div class="t " style="left:1238.63px;top:1248.99px;font-size:26px;letter-spacing:0.000px;color:#1c1c28;-webkit-text-stroke:0.35px;">-</div>
<div class="t " style="left:1548.18px;top:1248.99px;font-size:26px;letter-spacing:0.242px;color:#1c1c28;-webkit-text-stroke:0.35px;">44 minutes ago</div>
<svg style="position:absolute;left:0;top:0;overflow:visible" width="1" height="1" stroke="#1c1c28" stroke-width="1.7" stroke-linejoin="round" stroke-linecap="round"><path fill="#1c1c28" d="M1918.2 1274.1L1930.4 1266.6L1930.4 1280.6L1918.2 1288.1Z"/><path fill="none" d="M1917.9 1259.9L1930.4 1266.6L1918.2 1274.1L1905.7 1266.6Z"/><path fill="none" d="M1905.7 1266.6L1905.7 1280.6L1918.2 1288.1L1918.2 1274.1"/><path fill="none" stroke-width="1.7" d="M1908.3 1276.3l1.1 0.6M1912.3 1278.5l1.1 0.6"/></svg>
<div class="t " style="left:1942.03px;top:1254.79px;font-size:26px;letter-spacing:0.293px;color:#1c1c28;-webkit-text-stroke:0.35px;">OpenTofu</div>
<div class="t " style="left:2198.43px;top:1254.99px;font-size:26px;letter-spacing:0.000px;color:#1c1c28;-webkit-text-stroke:0.35px;">-</div>
<div style="position:absolute;left:2454px;top:1252px;width:48px;height:48px;box-sizing:border-box;border:2px solid #bdbdd1;border-radius:15px;background:#fff;"></div>
<svg style="position:absolute;left:0;top:0;overflow:visible" width="1" height="1" fill="#1c1c28"><circle cx="2468.3" cy="1276" r="2.55"/><circle cx="2478" cy="1276" r="2.55"/><circle cx="2487.7" cy="1276" r="2.55"/></svg>
<div style="position:absolute;left:746px;top:1332px;width:1782px;height:2px;background:#d6d6e4;"></div>
<div class="t u" style="left:777.26px;top:1370.19px;font-size:26px;letter-spacing:0.637px;color:#1c1c28;-webkit-text-stroke:0.35px;">exampletf-subnet</div>
<div class="t " style="left:1238.63px;top:1362.99px;font-size:26px;letter-spacing:0.000px;color:#1c1c28;-webkit-text-stroke:0.35px;">-</div>
<div class="t " style="left:1547.79px;top:1362.99px;font-size:26px;letter-spacing:0.272px;color:#1c1c28;-webkit-text-stroke:0.35px;">31 minutes ago</div>
<svg style="position:absolute;left:0;top:0;overflow:visible" width="1" height="1" stroke="#1c1c28" stroke-width="1.7" stroke-linejoin="round" stroke-linecap="round"><path fill="#1c1c28" d="M1918.2 1388.1L1930.4 1380.6L1930.4 1394.6L1918.2 1402.1Z"/><path fill="none" d="M1917.9 1373.9L1930.4 1380.6L1918.2 1388.1L1905.7 1380.6Z"/><path fill="none" d="M1905.7 1380.6L1905.7 1394.6L1918.2 1402.1L1918.2 1388.1"/><path fill="none" stroke-width="1.7" d="M1908.3 1390.3l1.1 0.6M1912.3 1392.5l1.1 0.6"/></svg>
<div class="t " style="left:1942.03px;top:1368.79px;font-size:26px;letter-spacing:0.293px;color:#1c1c28;-webkit-text-stroke:0.35px;">OpenTofu</div>
<div class="t " style="left:2198.43px;top:1368.99px;font-size:26px;letter-spacing:0.000px;color:#1c1c28;-webkit-text-stroke:0.35px;">-</div>
<div style="position:absolute;left:2454px;top:1366px;width:48px;height:48px;box-sizing:border-box;border:2px solid #bdbdd1;border-radius:15px;background:#fff;"></div>
<svg style="position:absolute;left:0;top:0;overflow:visible" width="1" height="1" fill="#1c1c28"><circle cx="2468.3" cy="1390" r="2.55"/><circle cx="2478" cy="1390" r="2.55"/><circle cx="2487.7" cy="1390" r="2.55"/></svg>
<div style="position:absolute;left:746px;top:1446px;width:1782px;height:2px;background:#d6d6e4;"></div>
<div style="position:absolute;left:648px;top:1414px;width:1880px;height:70px;background:#fff;"></div>
<div style="position:absolute;left:648px;top:1414px;width:1880px;height:2px;background:#d6d6e4;"></div>
<div class="t " style="left:671.20px;top:1435.02px;font-size:26.2px;letter-spacing:-0.377px;color:#6c6c88;font-weight:700;">Rows per page:</div>
<div style="position:absolute;left:875px;top:1432px;width:107px;height:48px;box-sizing:border-box;border:2px solid #bdbdd1;border-radius:15px;background:#fff;"></div>
<div class="t " style="left:893.64px;top:1435.02px;font-size:26.2px;letter-spacing:1.300px;color:#1c1c28;font-weight:700;">50</div>
<svg style="position:absolute;left:0;top:0;overflow:visible" width="1" height="1" fill="none" stroke="#1c1c28" stroke-width="2.6" stroke-linecap="round" stroke-linejoin="round" ><path d="M938.7 1451.8L948.1 1461.2L957.5 1451.8"/></svg>
<div class="t " style="left:1959.13px;top:1435.02px;font-size:26.2px;letter-spacing:0.476px;color:#6c6c88;font-weight:700;">1 - 1 of 1</div>
<div style="position:absolute;left:2094px;top:1432px;width:56px;height:48px;box-sizing:border-box;border:2px solid #bdbdd1;border-radius:15px;background:#d9d9e6;"></div>
<div style="position:absolute;left:2166px;top:1432px;width:130px;height:48px;box-sizing:border-box;border:2px solid #bdbdd1;border-radius:15px;background:#d9d9e6;"></div>
<div style="position:absolute;left:2312px;top:1432px;width:134px;height:48px;box-sizing:border-box;border:2px solid #bdbdd1;border-radius:15px;background:#d9d9e6;"></div>
<div style="position:absolute;left:2462px;top:1432px;width:56px;height:48px;box-sizing:border-box;border:2px solid #bdbdd1;border-radius:15px;background:#d9d9e6;"></div>
<svg style="position:absolute;left:0;top:0;overflow:visible" width="1" height="1" fill="none" stroke="#6c6c88" stroke-width="2.6" stroke-linecap="round" stroke-linejoin="round" ><path d="M2121.4 1447.8L2112.4 1456L2121.4 1464.2M2130.6 1447.8L2121.6 1456L2130.6 1464.2"/></svg>
<svg style="position:absolute;left:0;top:0;overflow:visible" width="1" height="1" fill="none" stroke="#6c6c88" stroke-width="2.6" stroke-linecap="round" stroke-linejoin="round" ><path d="M2189.6 1456H2210.6M2198.6 1447L2189.6 1456L2198.6 1465"/></svg>
<div class="t " style="left:2224.10px;top:1435.02px;font-size:26.2px;letter-spacing:-0.773px;color:#6c6c88;font-weight:700;">Prev</div>
<div class="t " style="left:2330.00px;top:1435.02px;font-size:26.2px;letter-spacing:0.547px;color:#6c6c88;font-weight:700;">Next</div>
<svg style="position:absolute;left:0;top:0;overflow:visible" width="1" height="1" fill="none" stroke="#6c6c88" stroke-width="2.6" stroke-linecap="round" stroke-linejoin="round" ><path d="M2401.4 1456H2422.6M2413.6 1447L2422.6 1456L2413.6 1465"/></svg>
<svg style="position:absolute;left:0;top:0;overflow:visible" width="1" height="1" fill="none" stroke="#6c6c88" stroke-width="2.6" stroke-linecap="round" stroke-linejoin="round" ><path d="M2482.2 1447.8L2491.2 1456L2482.2 1464.2M2491.4 1447.8L2500.4 1456L2491.4 1464.2"/></svg>
</div></body></html>
